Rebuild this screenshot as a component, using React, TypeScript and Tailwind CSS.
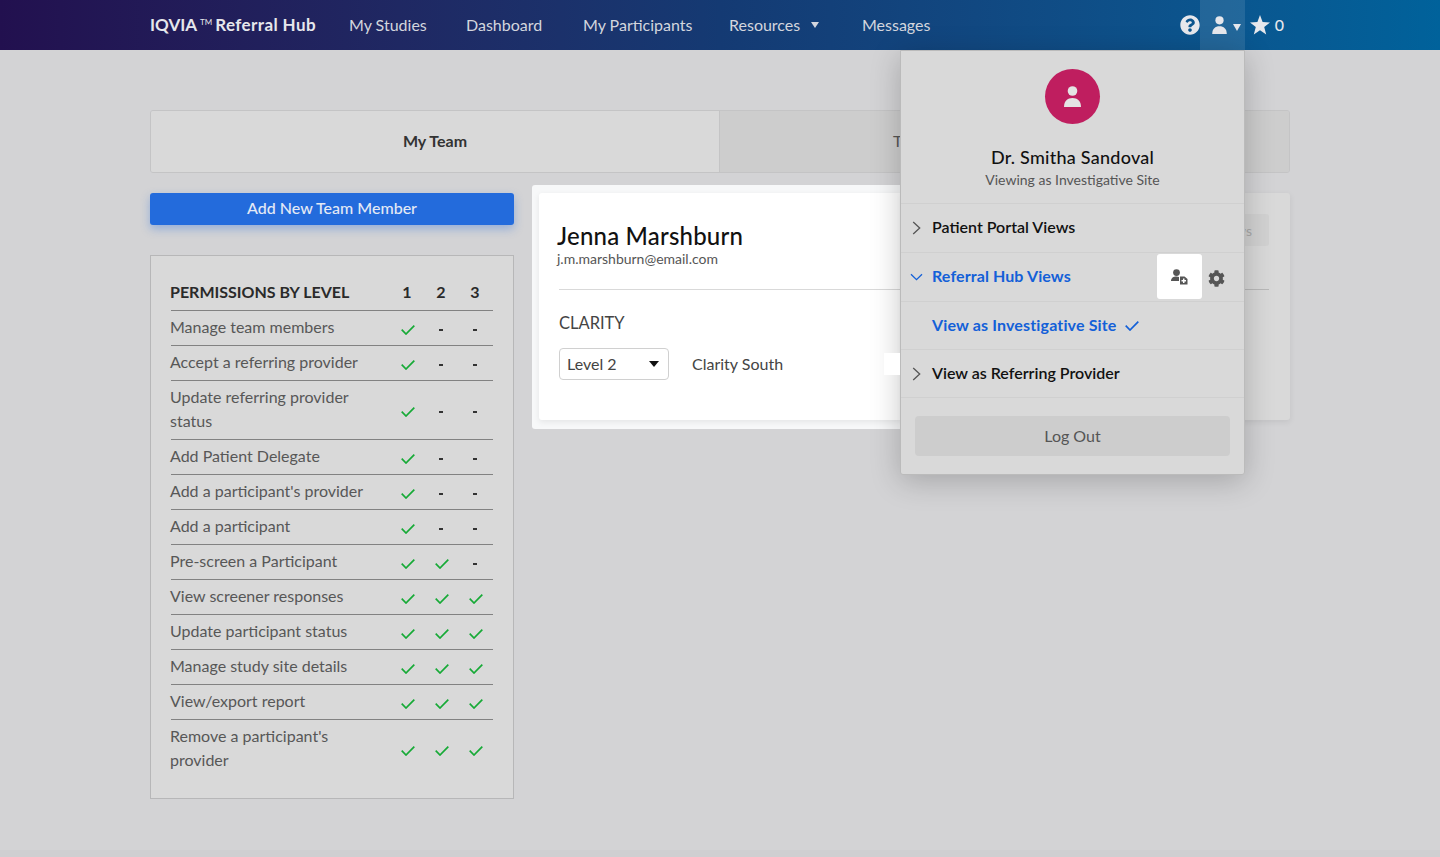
import { FaCog, FaQuestionCircle } from 'react-icons/fa';

const permissions = [
  { label: 'Manage team members', levels: [true, false, false] },
  { label: 'Accept a referring provider', levels: [true, false, false] },
  { label: 'Update referring provider status', levels: [true, false, false], tall: true },
  { label: 'Add Patient Delegate', levels: [true, false, false] },
  { label: "Add a participant's provider", levels: [true, false, false] },
  { label: 'Add a participant', levels: [true, false, false] },
  { label: 'Pre-screen a Participant', levels: [true, true, false] },
  { label: 'View screener responses', levels: [true, true, true] },
  { label: 'Update participant status', levels: [true, true, true] },
  { label: 'Manage study site details', levels: [true, true, true] },
  { label: 'View/export report', levels: [true, true, true] },
  { label: "Remove a participant's provider", levels: [true, true, true], tall: true, last: true },
];

function Check({ className }: { className: string }) {
  return (
    <svg viewBox="0 0 14 10" className={className} fill="none" stroke="currentColor" strokeWidth="1.7">
      <path d="M0.7 4.7 L5 9 L13.3 0.7" />
    </svg>
  );
}

function PersonIcon({ className }: { className: string }) {
  return (
    <svg viewBox="0 0 17 21" className={className} fill="currentColor">
      <circle cx="8.5" cy="5" r="4.8" />
      <path d="M0 21 C0 15 3.6 12 8.5 12 C13.4 12 17 15 17 21 Z" />
    </svg>
  );
}

function Nav() {
  return (
    <header className="h-[50px] flex items-center pl-[150px] bg-gradient-to-r from-[#22104f] via-[#143a73] to-[#00629b] text-[#d3d6de] text-[16px]">
      <div className="flex items-center font-bold text-[#e6e7ec] text-[17px] w-[199px]">
        IQVIA<span className="text-[8px] font-normal mx-[3px] mb-[6px]">TM</span>
        <span className="tracking-[0.4px]">Referral Hub</span>
      </div>
      <nav className="flex items-center">
        <span className="w-[117px]">My Studies</span>
        <span className="w-[117px]">Dashboard</span>
        <span className="w-[146px]">My Participants</span>
        <span className="w-[133px] flex items-center gap-[11px]">
          Resources
          <span className="border-x-[4.5px] border-x-transparent border-t-[6px] border-t-[#d3d6de]" />
        </span>
        <span>Messages</span>
      </nav>
      <div className="ml-auto flex items-center h-full mr-[156px] text-[#e6e7ec]">
        <FaQuestionCircle className="w-[20px] h-[20px]" />
        <div className="w-[45px] h-full bg-white/10 flex items-center pl-[12px] gap-[6px]">
          <PersonIcon className="w-[15px] h-[18px]" />
          <span className="border-x-[4px] border-x-transparent border-t-[7px] border-t-[#e6e7ec] mt-[4px]" />
        </div>
        <svg viewBox="0 0 20 20" className="w-[20px] h-[20px] ml-[5px]" fill="currentColor">
          <polygon points="10,0 12.6,7 20,7.4 14.2,12.1 16.2,19.4 10,15.3 3.8,19.4 5.8,12.1 0,7.4 7.4,7" />
        </svg>
        <span className="ml-[5px] text-[16px] font-medium">0</span>
      </div>
    </header>
  );
}

function PermissionsTable() {
  return (
    <div className="mt-[30px] h-[544px] border border-[#b7b7b8] bg-[#d9d9d9] pt-[19px] pl-[19px] pr-[20px]">
      <div className="flex h-[36px] items-center pb-[2px] font-bold text-[#2a2a2a] text-[16px] border-b border-[#828282] ml-[1px]">
        <span className="w-[220px] -ml-[1px]">PERMISSIONS BY LEVEL</span>
        <span className="w-[34px] text-center">1</span>
        <span className="w-[34px] text-center">2</span>
        <span className="w-[34px] text-center">3</span>
      </div>
      {permissions.map((row) => (
        <div
          key={row.label}
          className={`flex items-center ml-[1px] text-[#575757] text-[16px] leading-[24px] ${
            row.last ? 'h-[58px]' : row.tall ? 'h-[59px] border-b border-[#828282]' : 'h-[35px] border-b border-[#828282]'
          }`}
        >
          <span className="w-[220px] -ml-[1px] pr-[20px] pb-[2px]">{row.label}</span>
          {row.levels.map((on, j) => (
            <span key={j} className="w-[34px] flex justify-center pt-[3px]">
              {on ? (
                <Check className="w-[14px] h-[10px] ml-[2px] text-[#16aa36]" />
              ) : (
                <span className="w-[4px] h-[2px] bg-[#333]" />
              )}
            </span>
          ))}
        </div>
      ))}
    </div>
  );
}

function MenuItem({ label, open, active }: { label: string; open?: boolean; active?: boolean }) {
  return (
    <div
      className={`h-[49px] flex items-center pb-[2px] border-b border-[#d0d0d0] text-[16px] ${
        active ? 'text-[#1360d8] font-bold tracking-[0.1px]' : 'text-[#111] font-semibold'
      }`}
    >
      <span className="w-[31px] flex justify-center pt-[2px]">
        {open ? (
          <svg viewBox="0 0 13 8" className="w-[13px] h-[8px] text-[#1360d8]" fill="none" stroke="currentColor" strokeWidth="1.3">
            <path d="M1 1.2 L6.5 6.7 L12 1.2" />
          </svg>
        ) : (
          <svg viewBox="0 0 9 14" className="w-[9px] h-[14px] text-[#555]" fill="none" stroke="currentColor" strokeWidth="1.3">
            <path d="M1.2 1 L7.7 7 L1.2 13" />
          </svg>
        )}
      </span>
      {label}
    </div>
  );
}

function ProfileMenu() {
  return (
    <div className="absolute z-20 left-[900px] top-[50px] w-[345px] h-[425px] bg-[#d9d9d9] border border-[#bbb] rounded-b-[3px] shadow-[0_6px_30px_rgba(0,0,0,0.22)]">
      <div className="h-[153px] border-b border-[#d0d0d0] flex flex-col items-center pt-[18px]">
        <div className="w-[55px] h-[55px] rounded-full bg-[#bf1e5f] flex items-center justify-center text-[#e4e4e4]">
          <PersonIcon className="w-[17px] h-[21px]" />
        </div>
        <p className="mt-[21px] text-[18px] font-medium tracking-[0.25px] text-[#111] leading-[25px]">Dr. Smitha Sandoval</p>
        <p className="text-[14px] text-[#555] leading-[20px]">Viewing as Investigative Site</p>
      </div>
      <MenuItem label="Patient Portal Views" />
      <div className="relative">
        <MenuItem label="Referral Hub Views" open active />
        <div className="absolute left-[256px] top-[1px] w-[45px] h-[45px] bg-white rounded-[3px] flex items-center justify-center text-[#555]">
          <svg viewBox="0 0 17 16" className="w-[17px] h-[16px]" fill="currentColor">
            <circle cx="5.5" cy="3.6" r="3.4" />
            <path d="M0 12 C0 9 2.4 7.6 5.5 7.6 C6.6 7.6 7.4 7.8 8 8 L8 12 Z" />
            <path fillRule="evenodd" d="M9 7.5 H13.5 L16.5 10 V15.5 H9 Z M12 9.5 V11 H10.5 V12.5 H12 V14 H13.5 V12.5 H15 V11 H13.5 V9.5 Z" />
          </svg>
        </div>
        <FaCog className="absolute left-[307px] top-[17px] w-[17px] h-[17px] text-[#555]" />
      </div>
      <div className="h-[48px] flex items-center gap-[8px] pl-[31px] pb-[2px] border-b border-[#d0d0d0] font-bold tracking-[0.15px] text-[16px] text-[#1360d8]">
        View as Investigative Site
        <Check className="w-[14px] h-[10px] mt-[2px]" />
      </div>
      <div className="h-[48px] flex items-center pb-[2px] border-b border-[#d0d0d0] font-semibold text-[16px] text-[#111]">
        <span className="w-[31px] flex justify-center pt-[2px]">
          <svg viewBox="0 0 9 14" className="w-[9px] h-[14px] text-[#555]" fill="none" stroke="currentColor" strokeWidth="1.3">
            <path d="M1.2 1 L7.7 7 L1.2 13" />
          </svg>
        </span>
        View as Referring Provider
      </div>
      <div className="px-[14px] pt-[18px]">
        <div className="h-[40px] w-[315px] pb-[1px] rounded-[4px] bg-[#cdcdcd] flex items-center justify-center text-[16px] text-[#555]">
          Log Out
        </div>
      </div>
    </div>
  );
}

export default function App() {
  return (
    <div className="relative h-[857px] overflow-hidden bg-[#d3d3d5] font-['Lato',sans-serif]">
      <Nav />
      <main className="px-[150px] pt-[60px]">
        <div className="flex h-[63px] rounded-[3px] border border-[#c4c4c5] overflow-hidden font-bold text-[16px] text-[#333]">
          <div className="w-[568px] bg-[#d9d9d9] flex items-center justify-center pb-[2px]">My Team</div>
          <div className="flex-1 bg-[#cdcdcd] flex items-center pl-[173px] pb-[2px] border-l border-[#c4c4c5] font-normal text-[#555]">
            Team Permissions
          </div>
        </div>
        <div className="flex mt-[12px]">
          <div className="w-[364px] pt-[8px]">
            <button className="w-full h-[32px] pb-[2px] rounded-[3px] bg-[#236bdc] text-[#e3e9f5] text-[16px] font-medium shadow-[0_4px_10px_rgba(35,107,220,0.35)]">
              Add New Team Member
            </button>
            <PermissionsTable />
          </div>
          <div className="ml-[18px] flex-1 flex items-start">
            <div className="w-[370px] h-[244px] bg-[#f7f8f9] rounded-l-[3px] pt-[8px] pl-[7px]">
              <div className="h-[227px] bg-white rounded-l-[3px] pt-[29px] pl-[18px] shadow-[0_2px_6px_rgba(0,0,0,0.08)]">
                <h2 className="text-[24px] leading-[28px] font-medium tracking-[0.2px] text-[#111]">Jenna Marshburn</h2>
                <p className="text-[14px] leading-[18px] text-[#555]">j.m.marshburn@email.com</p>
                <div className="mt-[21px] ml-[2px] border-t border-[#d9d9d9]" />
                <p className="mt-[22px] ml-[2px] text-[16.5px] leading-[22px] text-[#444]">CLARITY</p>
                <div className="mt-[14px] ml-[2px] flex items-center text-[16px] text-[#444]">
                  <div className="w-[110px] h-[32px] rounded-[4px] border border-[#d0d0d0] flex items-center justify-between pl-[7px] pr-[9px]">
                    Level 2
                    <span className="border-x-[5px] border-x-transparent border-t-[6px] border-t-[#111]" />
                  </div>
                  <span className="ml-[23px]">Clarity South</span>
                  <span className="relative z-30 ml-auto mr-[2px] w-[16px] h-[22px] bg-white" />
                </div>
              </div>
            </div>
            <div className="flex-1 h-[227px] mt-[8px] bg-[#d9d9d9] rounded-r-[3px] pt-[21px] pr-[21px] shadow-[0_2px_6px_rgba(0,0,0,0.08)]">
              <div className="ml-auto w-[100px] h-[32px] bg-[#d2d2d2] rounded-[3px] flex items-center justify-end pr-[17px] text-[14px] text-[#a9a9a9]">
                Views
              </div>
              <div className="mt-[43px] border-t border-[#b9b9b9]" />
            </div>
          </div>
        </div>
      </main>
      <ProfileMenu />
      <div className="absolute left-0 right-0 bottom-0 h-[7px] bg-[#cfcfd1]" />
    </div>
  );
}
